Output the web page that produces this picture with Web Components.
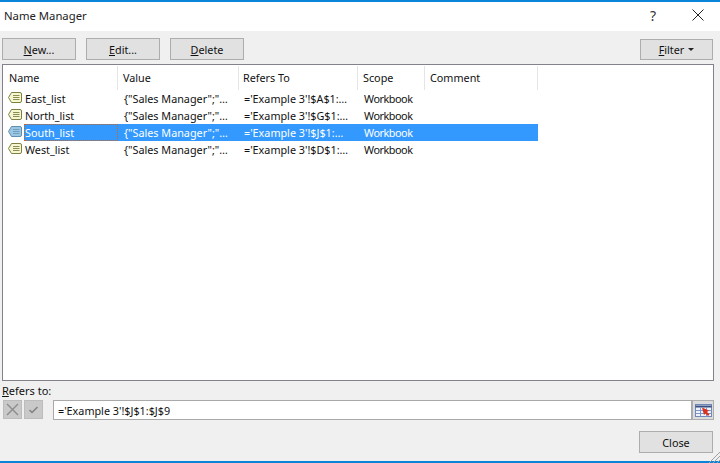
<!doctype html>
<html>
<head>
<meta charset="utf-8">
<title>Name Manager</title>
<style>
  html, body { margin: 0; padding: 0; height: 100%; overflow: hidden; }
  body { font: 10.8px "Noto Sans", "Open Sans", sans-serif; color: #111; background: #f0f0f0; }
</style>
</head>
<body>
<name-manager></name-manager>

<template id="dlg-button-tpl">
  <style>
    :host { display: block; width: 74px; height: 22px; box-sizing: border-box; border: 1px solid #adadad; background: #e1e1e1; }
    .in { height: 100%; display: flex; align-items: center; justify-content: center; gap: 4px; }
  </style>
  <div class="in"><slot></slot></div>
</template>

<script>
function shadow(el, html) {
  el.attachShadow({ mode: "open" }).innerHTML = html;
}

class DlgButton extends HTMLElement {
  constructor() {
    super();
    this.attachShadow({ mode: "open" }).appendChild(document.getElementById("dlg-button-tpl").content.cloneNode(true));
  }
}
customElements.define("dlg-button", DlgButton);

class TitleBar extends HTMLElement {
  constructor() {
    super();
    shadow(this, `
      <style>
        :host { display: flex; align-items: center; height: 29px; padding-left: 4px; background: #fff; border-top: 2px solid #0a84d8; font-size: 11.3px; color: #222; }
        .title { flex: 1; padding-bottom: 2px; }
        .help { width: 16px; text-align: center; font-size: 14px; margin-right: 31px; padding-bottom: 3px; color: #333; }
        svg { display: block; margin-right: 16px; margin-bottom: 3px; }
      </style>
      <span class="title"><slot></slot></span>
      <span class="help">?</span>
      <svg width="12" height="12" viewBox="0 0 12 12"><path d="M.5.5l11 11M11.5.5l-11 11" stroke="#222" fill="none"/></svg>
    `);
  }
}
customElements.define("title-bar", TitleBar);

const NAME_ICON = (fill, line, mark) => `
  <svg width="14" height="11" viewBox="0 0 14 11">
    <path d="M3.500.5H12Q13.500.5 13.500 2V9Q13.500 10.500 12 10.500H3.500L.5 5.500Z" fill="${fill}" stroke="${line}"/>
    <path d="M5 3.500h6.500M5 5.500h6.500M5 7.500h6.500" stroke="${mark}" fill="none"/>
  </svg>`;

class NameRow extends HTMLElement {
  constructor() {
    super();
    const sel = this.hasAttribute("selected") ? "sel" : "";
    shadow(this, `
      <style>
        :host { display: grid; grid-template-columns: 21px 94px 120px 120px 66px 114px; height: 17px; width: 535px; }
        .ic { display: flex; align-items: center; padding-left: 5px; padding-bottom: 2px; }
        .c { display: flex; align-items: center; white-space: pre; }
        .c1 { padding-left: 1px; } .c2 { padding-left: 6px; } .c3 { padding-left: 6px; }
        .c4 { padding-left: 6px; letter-spacing: -.45px; }
        .sel { background: #3399ff; color: #fff; }
        .c1.sel { outline: 1px dotted #c8641e; outline-offset: -1px; }
      </style>
      <span class="ic">${sel ? NAME_ICON("#9cc6e2", "#5f8fae", "#6f9fbe") : NAME_ICON("#f6f6d2", "#7d8040", "#8b8e50")}</span>
      <span class="c c1 ${sel}">${this.getAttribute("c1")}</span>
      <span class="c c2 ${sel}">${this.getAttribute("c2")}</span>
      <span class="c c3 ${sel}">${this.getAttribute("c3")}</span>
      <span class="c c4 ${sel}">${this.getAttribute("c4")}</span>
      <span class="${sel}"></span>
    `);
  }
}
customElements.define("name-row", NameRow);

class NameList extends HTMLElement {
  constructor() {
    super();
    shadow(this, `
      <style>
        :host { display: block; box-sizing: border-box; height: 317px; margin: 0 6px 0 2px; background: #fff; border: 1px solid #82828c; }
        .head { display: grid; grid-template-columns: 115px 121px 119px 67px 113px; width: 535px; height: 24px; margin-bottom: 0; padding-top: 1px; }
        .head span { display: flex; align-items: center; padding-left: 5px; border-right: 1px solid #e5e5e5; padding-bottom: 1px; }
        .head span:first-child { padding-left: 6px; }
        .head span:nth-child(3) { padding-left: 4px; }
      </style>
      <div class="head"><span>Name</span><span>Value</span><span>Refers To</span><span>Scope</span><span>Comment</span></div>
      <slot></slot>
    `);
  }
}
customElements.define("name-list", NameList);

class RefersBar extends HTMLElement {
  constructor() {
    super();
    shadow(this, `
      <style>
        :host { display: block; margin: 2px 6px 0 2px; }
        .label { height: 16px; line-height: 15px; font-size: 11px; }
        .row { display: flex; align-items: stretch; height: 20px; margin-top: 1px; }
        .b { width: 19px; height: 19px; background: #c9c9c9; box-sizing: border-box; display: flex; align-items: center; justify-content: center; margin-left: 1px; outline: 1px solid #bcbcbc; outline-offset: -1px; }
        .b + .b { margin-left: 2px; }
        .field { flex: 1; margin-left: 10px; box-sizing: border-box; background: #fff; border: 1px solid #a9a9a9; display: flex; align-items: center; padding-left: 4px; }
        .pick { width: 22px; box-sizing: border-box; background: #dcdcdc; border: 1px solid #adadad; display: flex; align-items: center; justify-content: center; }
      </style>
      <div class="label"><u>R</u>efers to:</div>
      <div class="row">
        <span class="b"><svg width="15" height="15" viewBox="0 0 15 15"><path d="M2 2l11 11M13 2L2 13" stroke="#8c8c8c" stroke-width="1.4" fill="none"/></svg></span>
        <span class="b"><svg width="11" height="9" viewBox="0 0 11 9"><path d="M1.5 5l2.5 2.5L9.5 2" stroke="#808080" stroke-width="1.5" fill="none"/></svg></span>
        <span class="field"><slot></slot></span>
        <span class="pick">
          <svg width="17" height="13" viewBox="0 0 17 13">
            <rect x=".5" y=".5" width="16" height="12" fill="#eef2fa" stroke="#6f86b8"/>
            <path d="M.5 2.500h16" stroke="#3b4f80" stroke-width="2"/>
            <path d="M.5 6.500h16M.5 9.500h16M5.500 3v10M11.500 3v10" stroke="#7f97c8" fill="none"/>
            <path d="M7 3.500l7 3-2 1.500 2.500 2.500-1.500 1.500-2.500-2.500L9 11Z" fill="#d8321e"/>
          </svg>
        </span>
      </div>
    `);
  }
}
customElements.define("refers-bar", RefersBar);

class NameManager extends HTMLElement {
  constructor() {
    super();
    const rows = [
      ["East_list", "$A$1"],
      ["North_list", "$G$1"],
      ["South_list", "$J$1"],
      ["West_list", "$D$1"]
    ];
    const rowHtml = rows.map(r => `<name-row ${r[0] === "South_list" ? "selected" : ""}
        c1="${r[0]}" c2='{"Sales Manager";"…' c3="='Example 3'!${r[1]}:…" c4="Workbook"></name-row>`).join("");
    shadow(this, `
      <style>
        :host { display: flex; flex-direction: column; height: 463px; box-sizing: border-box; border-bottom: 2px solid #0a84d8; position: relative; background: #f0f0f0; }
        .tools { display: flex; gap: 10px; padding: 7px 7px 0 2px; height: 26px; }
        .tools .sp { flex: 1; }
        .tools .filter { margin-top: 1px; margin-left: -10px; height: 21px; width: 73px; }
        .caret { width: 0; height: 0; border: 3px solid transparent; border-top: 3px solid #222; border-bottom: 0; }
        .foot { display: flex; justify-content: flex-end; padding: 11px 7px 0 0; }
        .grip { position: absolute; right: 0; bottom: -2px; }
      </style>
      <title-bar>Name Manager</title-bar>
      <div class="tools">
        <dlg-button><span><u>N</u>ew...</span></dlg-button>
        <dlg-button><span><u>E</u>dit...</span></dlg-button>
        <dlg-button><span><u>D</u>elete</span></dlg-button>
        <span class="sp"></span>
        <dlg-button class="filter"><span><u>F</u>ilter</span><span class="caret"></span></dlg-button>
      </div>
      <name-list>${rowHtml}</name-list>
      <refers-bar>='Example 3'!$J$1:$J$9</refers-bar>
      <div class="foot"><dlg-button>Close</dlg-button></div>
      <svg class="grip" width="12" height="12" viewBox="0 0 12 12"><path d="M12 1L1 12M12 5L5 12M12 9L9 12" stroke="#a0a0a0" fill="none"/></svg>
    `);
  }
}
customElements.define("name-manager", NameManager);
</script>
</body>
</html>
